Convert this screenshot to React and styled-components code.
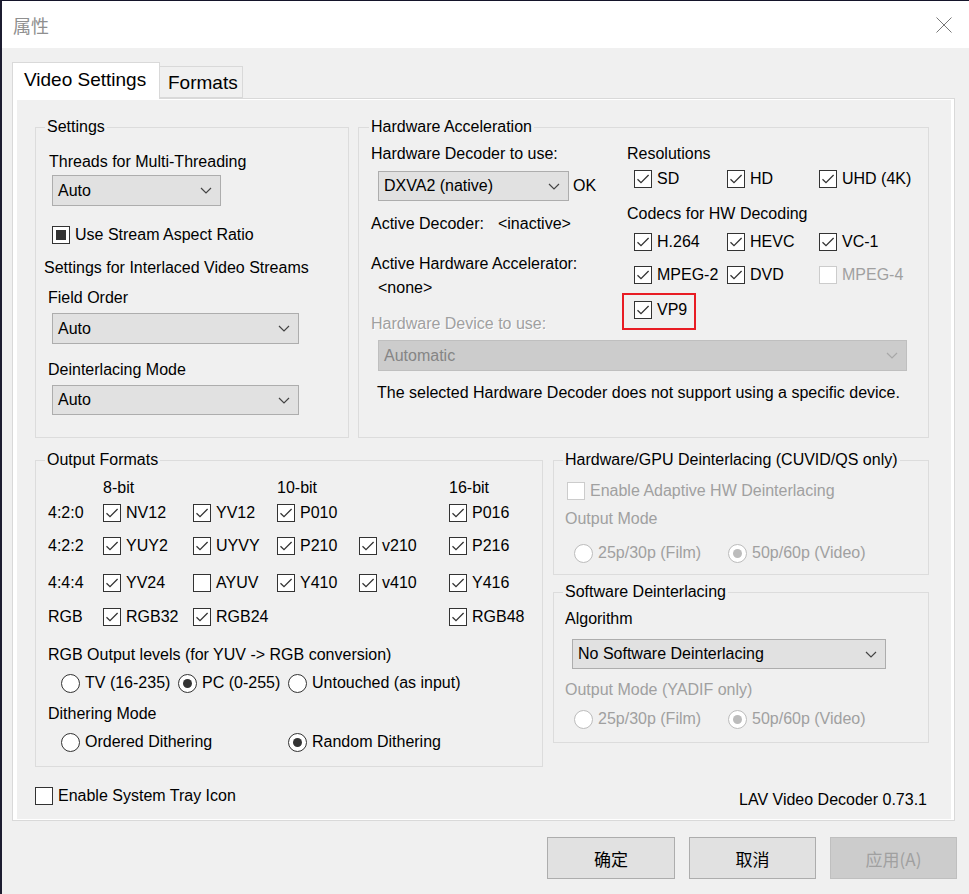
import styled, { createGlobalStyle } from "styled-components";

const GlobalStyle = createGlobalStyle`
  html, body {
    margin: 0;
    padding: 0;
    background: #f0f0f0;
  }
  body {
    font-family: "Liberation Sans", Arial, sans-serif;
  }
`;

const CJK = `"Noto Sans CJK SC", "Liberation Sans", sans-serif`;

const Window = styled.div`
  width: 969px;
  height: 894px;
  box-sizing: border-box;
  background: #f0f0f0;
  border-top: 1px solid #14142a;
  border-left: 2px solid #1c1c30;
  display: flex;
  flex-direction: column;
  overflow: hidden;
  font-family: "Liberation Sans", Arial, sans-serif;
  font-size: 16px;
  color: #000;
`;

const TitleBar = styled.div`
  height: 47px;
  flex: none;
  background: #fff;
  display: flex;
  align-items: center;
  justify-content: space-between;
  padding: 0 17px 0 11px;
`;

const Title = styled.div`
  font-family: ${CJK};
  font-size: 18px;
  color: #8f8f8f;
`;

const Body = styled.div`
  display: flex;
  flex-direction: column;
  padding: 14px 14px 0 10px;
`;

const TabStrip = styled.div`
  display: flex;
  align-items: flex-end;
  height: 36px;
`;

const Tab = styled.div`
  box-sizing: border-box;
  width: ${(p) => p.$w}px;
  height: ${(p) => (p.$active ? 37 : 32)}px;
  margin-bottom: ${(p) => (p.$active ? -1 : 0)}px;
  margin-left: ${(p) => (p.$active ? 0 : -1)}px;
  position: relative;
  z-index: ${(p) => (p.$active ? 1 : 0)};
  background: ${(p) => (p.$active ? "#fff" : "#f0f0f0")};
  border: 1px solid #d9d9d9;
  border-bottom: ${(p) => (p.$active ? "none" : "1px solid #d9d9d9")};
  padding: ${(p) => (p.$active ? "6px 0 0 11px" : "5px 0 0 8px")};
  font-size: 19px;
  line-height: 22px;
  white-space: nowrap;
`;

const TabPanel = styled.div`
  box-sizing: border-box;
  height: 723px;
  border: 1px solid #d9d9d9;
  background: #fff;
  padding: 1px 3px 1px 4px;
  display: flex;
`;

const Page = styled.div`
  flex: 1;
  background: #f0f0f0;
  display: flex;
  flex-direction: column;
  padding: 18px 0 0 18px;
`;

const Row = styled.div`
  display: flex;
  align-items: flex-start;
  gap: ${(p) => p.$gap || 0}px;
  margin-top: ${(p) => p.$mt || 0}px;
`;

const Column = styled.div`
  display: flex;
  flex-direction: column;
`;

const Group = styled.fieldset`
  box-sizing: border-box;
  margin: ${(p) => p.$mt || 0}px 0 0 0;
  padding: 0;
  min-width: 0;
  width: ${(p) => p.$w}px;
  height: ${(p) => p.$h}px;
  border: 1px solid #dcdcdc;
  display: flex;
  flex-direction: column;
  align-items: flex-start;
`;

const Legend = styled.legend`
  padding: 0 2px;
  margin-left: ${(p) => p.$ml || 9}px;
  line-height: 18px;
  font-size: 16px;
`;

const Label = styled.div`
  line-height: 20px;
  white-space: nowrap;
  margin-top: ${(p) => p.$mt || 0}px;
  margin-left: ${(p) => p.$ml || 0}px;
  color: ${(p) => (p.$disabled ? "#a0a0a0" : "#000")};
  text-shadow: ${(p) => (p.$emboss ? "1px 1px 0 #ffffff" : "none")};
`;

const Combo = styled.div`
  box-sizing: border-box;
  width: ${(p) => p.$w}px;
  height: ${(p) => p.$h || 31}px;
  margin-top: ${(p) => p.$mt || 0}px;
  margin-left: ${(p) => p.$ml || 0}px;
  flex: none;
  display: flex;
  align-items: center;
  justify-content: space-between;
  padding: 0 8px 0 5px;
  background: ${(p) => (p.$disabled ? "#cccccc" : "#e1e1e1")};
  border: 1px solid ${(p) => (p.$disabled ? "#bfbfbf" : "#adadad")};
  color: ${(p) => (p.$disabled ? "#858585" : "#000")};
  white-space: nowrap;
`;

const InlineRow = styled.div`
  display: flex;
  align-items: center;
  gap: ${(p) => p.$gap || 0}px;
  margin-top: ${(p) => p.$mt || 0}px;
  margin-left: ${(p) => p.$ml || 0}px;
  line-height: 20px;
  white-space: nowrap;
`;

const TwoCols = styled.div`
  display: grid;
  grid-template-columns: 256px 1fr;
  padding-left: 12px;
  align-self: stretch;
`;

const ChoiceGrid = styled.div`
  display: grid;
  grid-template-columns: ${(p) => p.$cols};
  margin-top: ${(p) => p.$mt || 0}px;
  margin-left: ${(p) => p.$ml || 0}px;
`;

const FormatGrid = styled.div`
  display: grid;
  grid-template-columns: 55px 90px 84px 82px 90px auto;
  grid-template-rows: 25px 33px 37px 34px 20px;
  margin-top: 9px;
  margin-left: 12px;
`;

const Cell = styled.div`
  grid-row: ${(p) => p.$row};
  grid-column: ${(p) => p.$col};
  line-height: 20px;
  height: 20px;
  white-space: nowrap;
`;

const Box = styled.span`
  box-sizing: border-box;
  width: 18px;
  height: 18px;
  flex: none;
  border: 1px solid ${(p) => (p.$disabled ? "#cccccc" : "#333333")};
  background: #fff;
  display: flex;
  align-items: center;
  justify-content: center;
`;

const Mixed = styled.span`
  width: 10px;
  height: 10px;
  background: #333;
`;

const CheckItem = styled.span`
  display: inline-flex;
  align-items: center;
  gap: 5px;
  height: 20px;
  line-height: 20px;
  white-space: nowrap;
  color: ${(p) => (p.$disabled ? "#a0a0a0" : "#000")};
`;

const Circle = styled.span`
  box-sizing: border-box;
  width: 19px;
  height: 19px;
  flex: none;
  border-radius: 50%;
  border: 1px solid ${(p) => (p.$disabled ? "#bcbcbc" : "#333333")};
  background: #fff;
  display: flex;
  align-items: center;
  justify-content: center;
`;

const Dot = styled.span`
  width: 9px;
  height: 9px;
  border-radius: 50%;
  background: ${(p) => (p.$disabled ? "#bcbcbc" : "#333333")};
`;

const Highlight = styled.div`
  align-self: flex-start;
  margin: 8px 0 0 -5px;
  padding: 5px 7px 6px 10px;
  border: 2px solid #e81c24;
`;

const Footer = styled.div`
  display: flex;
  justify-content: space-between;
  align-items: flex-start;
  margin-top: 19px;
  padding-right: 24px;
`;

const Version = styled.div`
  line-height: 20px;
  padding-top: 4px;
  white-space: nowrap;
`;

const ButtonRow = styled.div`
  display: flex;
  justify-content: flex-end;
  gap: 14px;
  margin: 16px -2px 0 0;
`;

const Button = styled.div`
  box-sizing: border-box;
  width: ${(p) => p.$w || 128}px;
  height: 42px;
  display: flex;
  align-items: center;
  justify-content: center;
  font-family: ${CJK};
  font-size: 17px;
  background: ${(p) => (p.$disabled ? "#cccccc" : "#e1e1e1")};
  border: 1px solid ${(p) => (p.$disabled ? "#bfbfbf" : "#adadad")};
  color: ${(p) => (p.$disabled ? "#a0a0a0" : "#000")};
`;

const Chevron = ({ disabled }) => (
  <svg width="12" height="7" viewBox="0 0 12 7">
    <polyline
      points="1,1 6,6 11,1"
      fill="none"
      stroke={disabled ? "#a8a8a8" : "#444"}
      strokeWidth="1.2"
    />
  </svg>
);

const CloseIcon = () => (
  <svg width="16" height="16" viewBox="0 0 16 16">
    <path d="M0.5 0.5 L15.5 15.5 M15.5 0.5 L0.5 15.5" stroke="#777" strokeWidth="1" />
  </svg>
);

const Check = ({ label, checked = true, mixed, disabled }) => (
  <CheckItem $disabled={disabled}>
    <Box $disabled={disabled}>
      {mixed ? (
        <Mixed />
      ) : checked ? (
        <svg width="16" height="16" viewBox="0 0 16 16">
          <polyline
            points="2.5,8.2 6,11.6 13.6,4"
            fill="none"
            stroke="#333"
            strokeWidth="1.3"
          />
        </svg>
      ) : null}
    </Box>
    {label}
  </CheckItem>
);

const Radio = ({ label, selected, disabled }) => (
  <CheckItem $disabled={disabled}>
    <Circle $disabled={disabled}>{selected && <Dot $disabled={disabled} />}</Circle>
    {label}
  </CheckItem>
);

const Select = ({ value, w, h, mt, ml, disabled }) => (
  <Combo $w={w} $h={h} $mt={mt} $ml={ml} $disabled={disabled}>
    {value}
    <Chevron disabled={disabled} />
  </Combo>
);

const formatRows = [
  { label: "4:2:0", items: [[2, "NV12"], [3, "YV12"], [4, "P010"], [6, "P016"]] },
  { label: "4:2:2", items: [[2, "YUY2"], [3, "UYVY"], [4, "P210"], [5, "v210"], [6, "P216"]] },
  { label: "4:4:4", items: [[2, "YV24"], [3, "AYUV", false], [4, "Y410"], [5, "v410"], [6, "Y416"]] },
  { label: "RGB", items: [[2, "RGB32"], [3, "RGB24"], [6, "RGB48"]] },
];

export default function App() {
  return (
    <>
      <GlobalStyle />
      <Window>
        <TitleBar>
          <Title>属性</Title>
          <CloseIcon />
        </TitleBar>
        <Body>
          <TabStrip>
            <Tab $active $w={148}>Video Settings</Tab>
            <Tab $w={84}>Formats</Tab>
          </TabStrip>
          <TabPanel>
            <Page>
              <Row $gap={9}>
                <Group $w={314} $h={320}>
                  <Legend>Settings</Legend>
                  <Label $mt={16} $ml={13}>Threads for Multi-Threading</Label>
                  <Select value="Auto" w={169} mt={3} ml={16} />
                  <InlineRow $mt={19} $ml={16}>
                    <Check label="Use Stream Aspect Ratio" mixed />
                  </InlineRow>
                  <Label $mt={13} $ml={8}>Settings for Interlaced Video Streams</Label>
                  <Label $mt={10} $ml={12}>Field Order</Label>
                  <Select value="Auto" w={247} mt={5} ml={16} />
                  <Label $mt={16} $ml={12}>Deinterlacing Mode</Label>
                  <Select value="Auto" w={247} h={30} mt={5} ml={16} />
                </Group>
                <Group $w={571} $h={320}>
                  <Legend $ml={10}>Hardware Acceleration</Legend>
                  <TwoCols>
                    <Column>
                      <Label $mt={8}>Hardware Decoder to use:</Label>
                      <InlineRow $mt={7} $ml={7} $gap={4}>
                        <Select value="DXVA2 (native)" w={191} h={30} />
                        OK
                      </InlineRow>
                      <InlineRow $mt={13} $gap={14}>
                        <span>Active Decoder:</span>
                        <span>&lt;inactive&gt;</span>
                      </InlineRow>
                      <Label $mt={20}>Active Hardware Accelerator:</Label>
                      <Label $mt={4} $ml={7}>&lt;none&gt;</Label>
                      <Label $mt={16} $disabled $emboss>Hardware Device to use:</Label>
                    </Column>
                    <Column>
                      <Label $mt={8}>Resolutions</Label>
                      <ChoiceGrid $cols="93px 92px auto" $mt={5} $ml={7}>
                        <Check label="SD" />
                        <Check label="HD" />
                        <Check label="UHD (4K)" />
                      </ChoiceGrid>
                      <Label $mt={15}>Codecs for HW Decoding</Label>
                      <ChoiceGrid $cols="93px 92px auto" $mt={8} $ml={7}>
                        <Check label="H.264" />
                        <Check label="HEVC" />
                        <Check label="VC-1" />
                      </ChoiceGrid>
                      <ChoiceGrid $cols="93px 92px auto" $mt={13} $ml={7}>
                        <Check label="MPEG-2" />
                        <Check label="DVD" />
                        <Check label="MPEG-4" checked={false} disabled />
                      </ChoiceGrid>
                      <Highlight>
                        <Check label="VP9" />
                      </Highlight>
                    </Column>
                  </TwoCols>
                  <Select value="Automatic" w={529} mt={6} ml={19} disabled />
                  <Label $mt={12} $ml={18}>
                    The selected Hardware Decoder does not support using a specific device.
                  </Label>
                </Group>
              </Row>
              <Row $gap={10} $mt={13}>
                <Group $w={508} $h={316}>
                  <Legend>Output Formats</Legend>
                  <FormatGrid>
                    <Cell $row={1} $col={2}>8-bit</Cell>
                    <Cell $row={1} $col={4}>10-bit</Cell>
                    <Cell $row={1} $col={6}>16-bit</Cell>
                    {formatRows.map((r, i) => [
                      <Cell key={r.label} $row={i + 2} $col={1}>
                        {r.label}
                      </Cell>,
                      ...r.items.map(([col, name, on]) => (
                        <Cell key={name} $row={i + 2} $col={col}>
                          <Check label={name} checked={on !== false} />
                        </Cell>
                      )),
                    ])}
                  </FormatGrid>
                  <Label $mt={18} $ml={12}>RGB Output levels (for YUV -&gt; RGB conversion)</Label>
                  <ChoiceGrid $cols="117px 110px auto" $mt={8} $ml={25}>
                    <Radio label="TV (16-235)" />
                    <Radio label="PC (0-255)" selected />
                    <Radio label="Untouched (as input)" />
                  </ChoiceGrid>
                  <Label $mt={11} $ml={12}>Dithering Mode</Label>
                  <ChoiceGrid $cols="227px auto" $mt={8} $ml={25}>
                    <Radio label="Ordered Dithering" />
                    <Radio label="Random Dithering" selected />
                  </ChoiceGrid>
                </Group>
                <Column>
                  <Group $w={376} $h={124}>
                    <Legend>Hardware/GPU Deinterlacing (CUVID/QS only)</Legend>
                    <InlineRow $mt={12} $ml={13}>
                      <Check label="Enable Adaptive HW Deinterlacing" checked={false} disabled />
                    </InlineRow>
                    <Label $mt={8} $ml={11} $disabled>Output Mode</Label>
                    <ChoiceGrid $cols="154px auto" $mt={14} $ml={20}>
                      <Radio label="25p/30p (Film)" disabled />
                      <Radio label="50p/60p (Video)" selected disabled />
                    </ChoiceGrid>
                  </Group>
                  <Group $w={376} $h={160} $mt={8}>
                    <Legend>Software Deinterlacing</Legend>
                    <Label $mt={8} $ml={11}>Algorithm</Label>
                    <Select value="No Software Deinterlacing" w={314} h={30} mt={10} ml={18} />
                    <Label $mt={11} $ml={11} $disabled>Output Mode (YADIF only)</Label>
                    <ChoiceGrid $cols="154px auto" $mt={9} $ml={20}>
                      <Radio label="25p/30p (Film)" disabled />
                      <Radio label="50p/60p (Video)" selected disabled />
                    </ChoiceGrid>
                  </Group>
                </Column>
              </Row>
              <Footer>
                <Check label="Enable System Tray Icon" checked={false} />
                <Version>LAV Video Decoder 0.73.1</Version>
              </Footer>
            </Page>
          </TabPanel>
          <ButtonRow>
            <Button>确定</Button>
            <Button $w={127}>取消</Button>
            <Button $w={127} $disabled>应用(A)</Button>
          </ButtonRow>
        </Body>
      </Window>
    </>
  );
}
